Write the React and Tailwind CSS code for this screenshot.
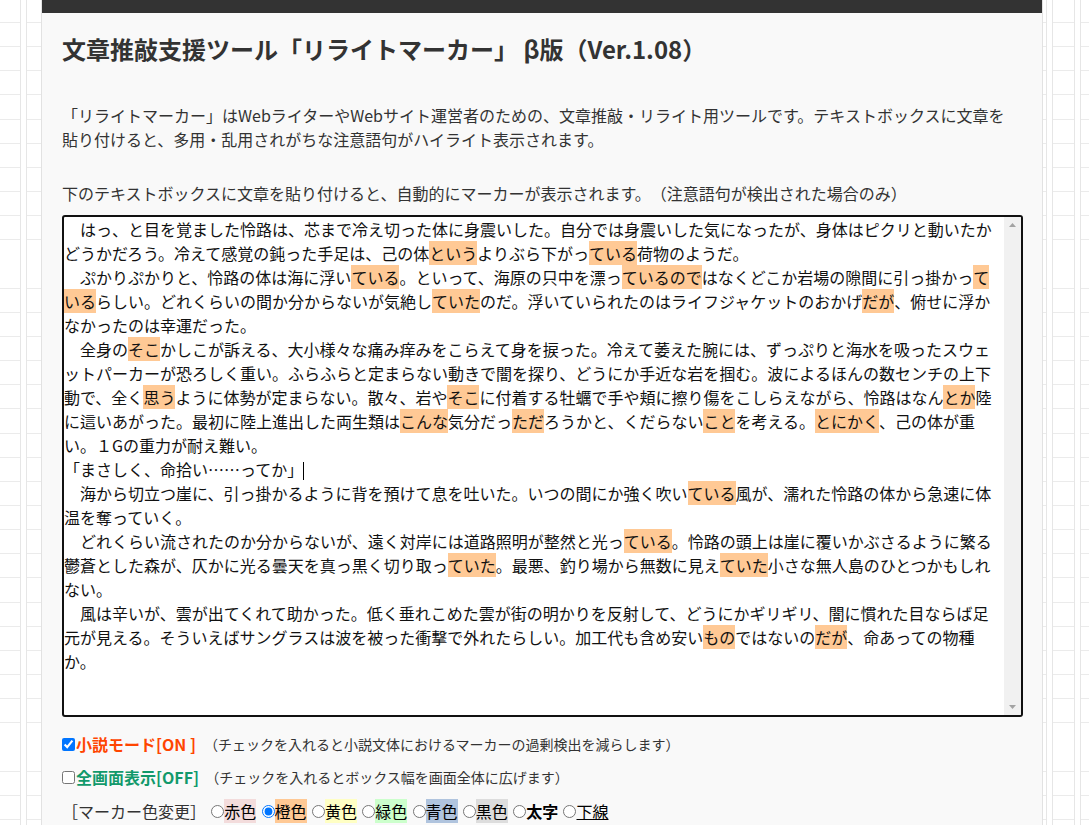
import React from 'react';

const FONT = "font-['Noto_Sans_CJK_JP','Noto_Sans',sans-serif]";

// 本文（[]で囲った部分が注意語句のマーカー）
const lines = [
  '　はっ、と目を覚ました怜路は、芯まで冷え切った体に身震いした。自分では身震いした気になったが、身体はピクリと動いたか',
  'どうかだろう。冷えて感覚の鈍った手足は、己の体[という]よりぶら下がっ[ている]荷物のようだ。',
  '　ぷかりぷかりと、怜路の体は海に浮い[ている]。といって、海原の只中を漂っ[ているので]はなくどこか岩場の隙間に引っ掛かっ[て]',
  '[いる]らしい。どれくらいの間か分からないが気絶し[ていた]のだ。浮いていられたのはライフジャケットのおかげ[だが]、俯せに浮か',
  'なかったのは幸運だった。',
  '　全身の[そこ]かしこが訴える、大小様々な痛み痒みをこらえて身を捩った。冷えて萎えた腕には、ずっぷりと海水を吸ったスウェ',
  'ットパーカーが恐ろしく重い。ふらふらと定まらない動きで闇を探り、どうにか手近な岩を掴む。波によるほんの数センチの上下',
  '動で、全く[思う]ように体勢が定まらない。散々、岩や[そこ]に付着する牡蠣で手や頬に擦り傷をこしらえながら、怜路はなん[とか]陸',
  'に這いあがった。最初に陸上進出した両生類は[こんな]気分だっ[ただ]ろうかと、くだらない[こと]を考える。[とにかく]、己の体が重',
  'い。１Gの重力が耐え難い。',
  '「まさしく、命拾い……ってか」',
  '　海から切立つ崖に、引っ掛かるように背を預けて息を吐いた。いつの間にか強く吹い[ている]風が、濡れた怜路の体から急速に体',
  '温を奪っていく。',
  '　どれくらい流されたのか分からないが、遠く対岸には道路照明が整然と光っ[ている]。怜路の頭上は崖に覆いかぶさるように繁る',
  '鬱蒼とした森が、仄かに光る曇天を真っ黒く切り取っ[ていた]。最悪、釣り場から無数に見え[ていた]小さな無人島のひとつかもしれ',
  'ない。',
  '　風は辛いが、雲が出てくれて助かった。低く垂れこめた雲が街の明かりを反射して、どうにかギリギリ、闇に慣れた目ならば足',
  '元が見える。そういえばサングラスは波を被った衝撃で外れたらしい。加工代も含め安い[もの]ではないの[だが]、命あっての物種',
  'か。',
];

const colors = [
  { label: '赤色', cls: 'bg-[#f3dcdc]' },
  { label: '橙色', cls: 'bg-[#ffc995]', checked: true },
  { label: '黄色', cls: 'bg-[#ffffc4]' },
  { label: '緑色', cls: 'bg-[#ccffcc]' },
  { label: '青色', cls: 'bg-[#b0c4de]' },
  { label: '黒色', cls: 'bg-[#dddddd]' },
  { label: '太字', cls: 'font-bold' },
  { label: '下線', cls: 'underline' },
];

function Line({ text, caret }) {
  const parts = text.split(/(\[[^\]]+\])/).filter(Boolean);
  return (
    <div className="whitespace-nowrap h-[24px]">
      {parts.map((p, i) =>
        p.startsWith('[') ? (
          <span key={i} className="inline-block bg-[#ffc995] leading-[24px]">
            {p.slice(1, -1)}
          </span>
        ) : (
          <span key={i}>{p}</span>
        )
      )}
      {caret && <span className="inline-block w-px h-[18px] bg-black align-[-4px]" />}
    </div>
  );
}

export default function App() {
  return (
    <div
      className={`min-h-screen bg-white ${FONT} [text-spacing-trim:space-all] bg-[image:repeating-linear-gradient(to_right,transparent_0_20px,#e6e6e6_20px_21px,#fff_21px_26px,#e6e6e6_26px_27px,transparent_27px_27.73px),repeating-linear-gradient(to_bottom,transparent_0_22px,#ebebeb_22px_23px,transparent_23px_24.15px)]`}
    >
      <div className="ml-[41px] w-[1002px] min-h-[825px] bg-[#f9f9f9] border-x border-[#e2e2e2] text-[#333]">
        {/* Header bar */}
        <div className="h-[13px] bg-[#333]" />

        <div className="px-[20px]">
          <h1 className="mt-[18px] text-[24px] leading-[36px] font-bold text-[#333]">
            文章推敲支援ツール「リライトマーカー」 β版（Ver.1.08）
          </h1>

          <p className="mt-[36px] text-[16px] leading-[24px]">
            「リライトマーカー」はWebライターやWebサイト運営者のための、文章推敲・リライト用ツールです。テキストボックスに文章を
            <br />
            貼り付けると、多用・乱用されがちな注意語句がハイライト表示されます。
          </p>

          <p className="mt-[30px] text-[16px] leading-[24px]">
            下のテキストボックスに文章を貼り付けると、自動的にマーカーが表示されます。（注意語句が検出された場合のみ）
          </p>

          {/* Text box */}
          <div className="mt-[10px] mr-[-1px] h-[502px] flex border-2 border-[#111] rounded-[3px] bg-white overflow-hidden">
            <div className="flex-1 text-[16px] leading-[24px] text-[#111] overflow-hidden">
              {lines.map((t, i) => (
                <Line key={i} text={t} caret={i === 10} />
              ))}
            </div>
            <div className="w-[17px] bg-[#f1f1f1] flex flex-col items-center justify-between py-[6px]">
              <svg width="7" height="4" viewBox="0 0 7 4">
                <path d="M3.5 0 L7 4 L0 4 Z" fill="#a3a3a3" />
              </svg>
              <svg width="7" height="4" viewBox="0 0 7 4">
                <path d="M0 0 L7 0 L3.5 4 Z" fill="#a3a3a3" />
              </svg>
            </div>
          </div>

          {/* Options */}
          <label className="mt-[15px] flex items-center h-[24px]">
            <input type="checkbox" defaultChecked className="m-0 w-[13px] h-[13px] mr-px" />
            <span className="text-[16px] font-bold text-[#ff4500] whitespace-pre">小説モード[ON ]</span>
            <span className="ml-[8px] text-[14px]">（チェックを入れると小説文体におけるマーカーの過剰検出を減らします）</span>
          </label>

          <label className="mt-[9px] flex items-center h-[24px]">
            <input type="checkbox" className="m-0 w-[13px] h-[13px] mr-px" />
            <span className="text-[16px] font-bold text-[#12996b]">全画面表示[OFF]</span>
            <span className="ml-[6px] text-[14px]">（チェックを入れるとボックス幅を画面全体に広げます）</span>
          </label>

          <div className="mt-[10px] flex items-center h-[24px] text-[16px] leading-[24px] gap-[5.3px]">
            <span className="w-[144px]">［マーカー色変更］</span>
            {colors.map((c) => (
              <label key={c.label} className="flex items-center">
                <input
                  type="radio"
                  name="marker"
                  defaultChecked={c.checked}
                  className="m-0 w-[13px] h-[13px]"
                />
                <span className={`${c.cls} text-black`}>{c.label}</span>
              </label>
            ))}
          </div>
        </div>
      </div>
    </div>
  );
}
